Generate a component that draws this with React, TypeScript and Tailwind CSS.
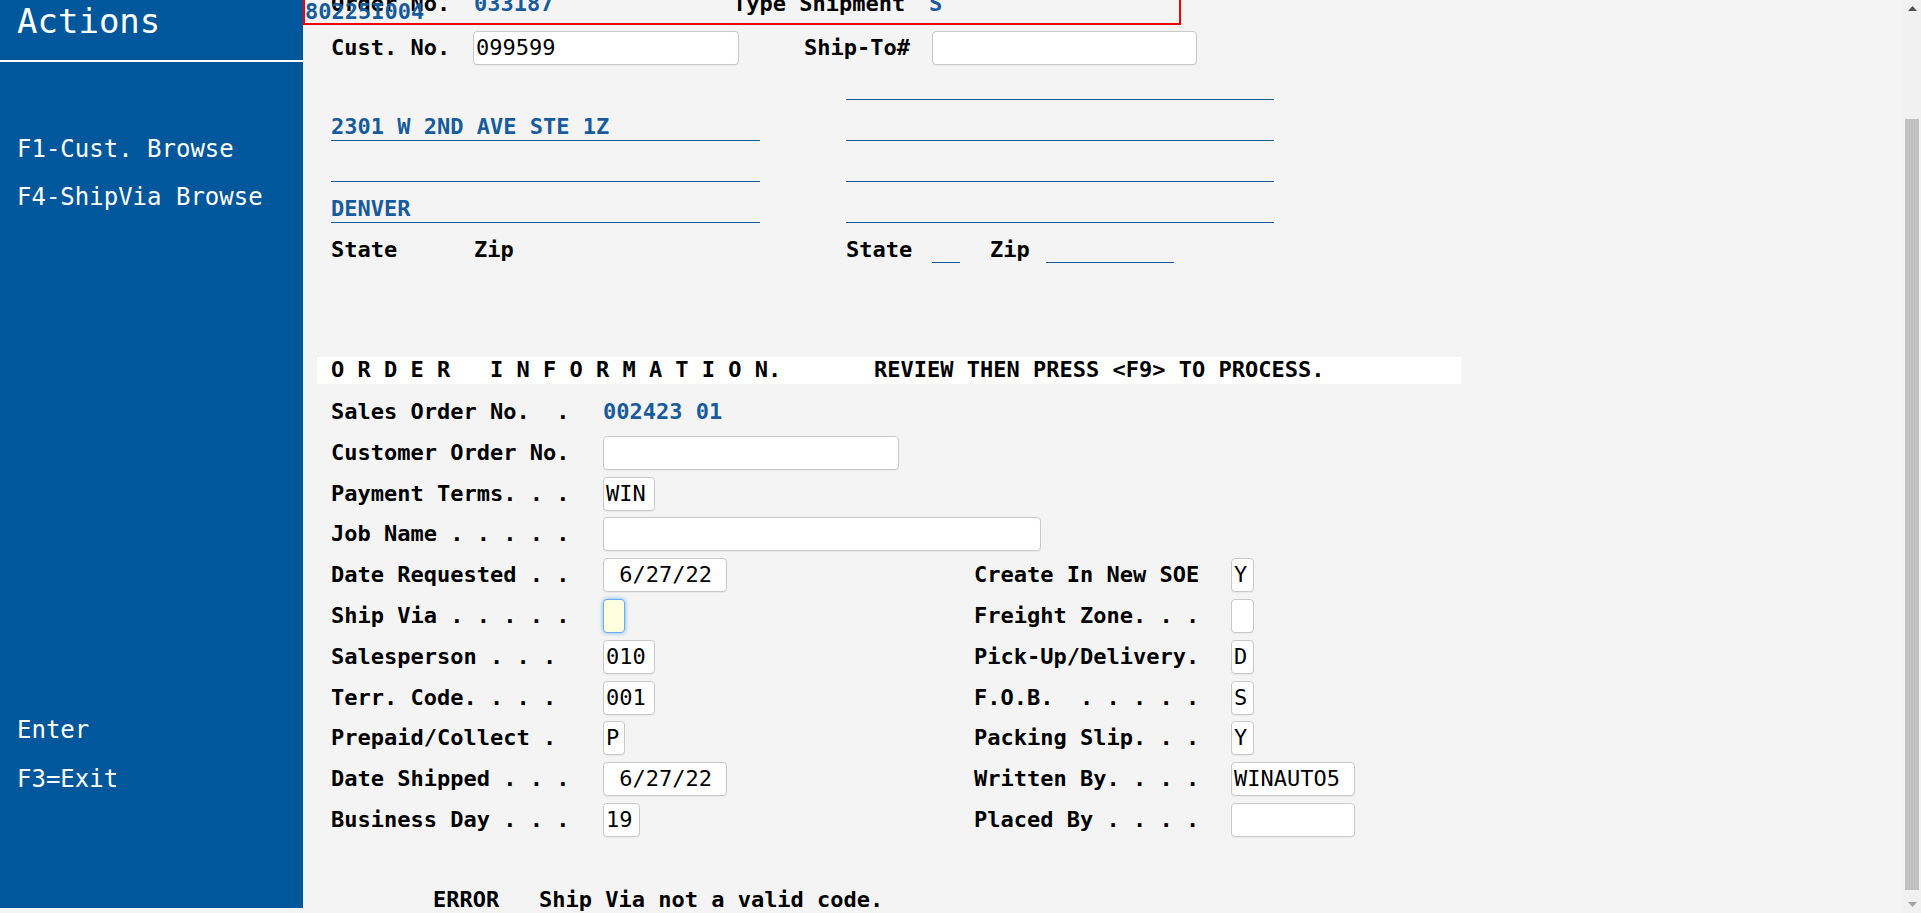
const mono = { fontFamily: '"DejaVu Sans Mono", "Liberation Mono", monospace' }

function Field({ value = '', w, focused = false }: { value?: string; w: string; focused?: boolean }) {
  return (
    <div
      className={`${w} h-[34px] shrink-0 rounded-[4px] border pl-[2px] text-[22px] leading-[32px] whitespace-pre text-black ${
        focused
          ? 'border-[#6aaef0] bg-[#ffffe0] shadow-[0_0_4px_#6aaef0]'
          : 'border-[#c9c9c9] bg-white shadow-[0_1px_1px_rgba(0,0,0,0.05)]'
      }`}
    >
      {value}
    </div>
  )
}

function Label({ text, w }: { text: string; w: string }) {
  return <div className={`${w} shrink-0 whitespace-pre font-bold text-[22px] leading-[26px] text-black`}>{text}</div>
}

type Side = { label: string; value?: string; w: string; focused?: boolean }

const rows: { left: Side; right?: Side }[] = [
  { left: { label: 'Customer Order No.', w: 'w-[296px]' } },
  { left: { label: 'Payment Terms. . .', value: 'WIN', w: 'w-[52px]' } },
  { left: { label: 'Job Name . . . . .', w: 'w-[438px]' } },
  {
    left: { label: 'Date Requested . .', value: ' 6/27/22', w: 'w-[124px]' },
    right: { label: 'Create In New SOE', value: 'Y', w: 'w-[23px]' },
  },
  {
    left: { label: 'Ship Via . . . . .', w: 'w-[22px]', focused: true },
    right: { label: 'Freight Zone. . .', w: 'w-[23px]' },
  },
  {
    left: { label: 'Salesperson . . .', value: '010', w: 'w-[52px]' },
    right: { label: 'Pick-Up/Delivery.', value: 'D', w: 'w-[23px]' },
  },
  {
    left: { label: 'Terr. Code. . . .', value: '001', w: 'w-[52px]' },
    right: { label: 'F.O.B.  . . . . .', value: 'S', w: 'w-[23px]' },
  },
  {
    left: { label: 'Prepaid/Collect .', value: 'P', w: 'w-[22px]' },
    right: { label: 'Packing Slip. . .', value: 'Y', w: 'w-[23px]' },
  },
  {
    left: { label: 'Date Shipped . . .', value: ' 6/27/22', w: 'w-[124px]' },
    right: { label: 'Written By. . . .', value: 'WINAUTO5', w: 'w-[124px]' },
  },
  {
    left: { label: 'Business Day . . .', value: '19', w: 'w-[37px]' },
    right: { label: 'Placed By . . . .', w: 'w-[124px]' },
  },
]

function Sidebar() {
  return (
    <aside className="w-[303px] h-[908px] shrink-0 bg-[#01579c] text-white flex flex-col">
      <div className="h-[60px] pl-[17px] text-[34px] leading-[42px]">Actions</div>
      <div className="h-[2px] bg-white" />
      <div className="mt-[72px] pl-[17px] text-[24px] leading-[30px]">F1-Cust. Browse</div>
      <div className="mt-[18px] pl-[17px] text-[24px] leading-[30px]">F4-ShipVia Browse</div>
      <div className="mt-[503px] pl-[17px] text-[24px] leading-[30px]">Enter</div>
      <div className="mt-[19px] pl-[17px] text-[24px] leading-[30px]">F3=Exit</div>
    </aside>
  )
}

function Scrollbar() {
  return (
    <div className="w-[18px] h-[913px] shrink-0 bg-[#f1f1f1] flex flex-col items-center">
      <div className="h-[17px] w-full flex items-center justify-center">
        <svg width="9" height="5" viewBox="0 0 9 5">
          <path d="M0 5 L4.5 0 L9 5 Z" fill="#505050" />
        </svg>
      </div>
      <div className="h-[102px]" />
      <div className="h-[771px] w-[14px] bg-[#c1c1c1]" />
      <div className="flex-1" />
      <div className="h-[17px] w-full flex items-center justify-center">
        <svg width="9" height="5" viewBox="0 0 9 5">
          <path d="M0 0 L9 0 L4.5 5 Z" fill="#a3a3a3" />
        </svg>
      </div>
    </div>
  )
}

const blue = 'text-[#175b9c]'

export default function App() {
  return (
    <div className="w-full h-[913px] overflow-hidden flex bg-[#f4f4f4]" style={mono}>
      <Sidebar />

      <main className="flex-1 h-[913px] overflow-hidden flex flex-col">
        {/* header box, scrolled partly out of view */}
        <div className="relative mt-[-14px] w-[878px] h-[39px] border-2 border-[#f00000] pt-[3px] pl-[26px] flex">
          <Label text="Order No." w="w-[143px]" />
          <div className={`w-[259px] font-bold text-[22px] leading-[26px] ${blue}`}>033187</div>
          <Label text="Type Shipment" w="w-[196px]" />
          <div className={`font-bold text-[22px] leading-[26px] ${blue}`}>S</div>
          <div className={`absolute left-0 top-[11px] font-bold text-[22px] leading-[26px] ${blue}`}>80225I004</div>
        </div>

        {/* customer */}
        <div className="mt-[6px] h-[34px] pl-[28px] flex items-center">
          <Label text="Cust. No." w="w-[142px]" />
          <Field value="099599" w="w-[266px]" />
          <div className="ml-[65px]">
            <Label text="Ship-To#" w="w-[128px]" />
          </div>
          <Field w="w-[265px]" />
        </div>

        {/* addresses */}
        <div className="pl-[28px] flex">
          <div className="w-[429px] flex flex-col">
            <div className="h-[35px]" />
            <div className={`h-[41px] border-b border-[#175b9c] flex items-end font-bold text-[22px] leading-[26px] whitespace-pre ${blue}`}>
              2301 W 2ND AVE STE 1Z
            </div>
            <div className="h-[41px] border-b border-[#175b9c]" />
            <div className={`h-[41px] border-b border-[#175b9c] flex items-end font-bold text-[22px] leading-[26px] ${blue}`}>
              DENVER
            </div>
            <div className="h-[40px] flex items-end">
              <Label text="State" w="w-[143px]" />
              <Label text="Zip" w="w-[60px]" />
            </div>
          </div>
          <div className="ml-[86px] w-[428px] flex flex-col">
            <div className="h-[35px] border-b border-[#175b9c]" />
            <div className="h-[41px] border-b border-[#175b9c]" />
            <div className="h-[41px] border-b border-[#175b9c]" />
            <div className="h-[41px] border-b border-[#175b9c]" />
            <div className="h-[40px] flex items-end">
              <Label text="State" w="w-[86px]" />
              <div className="w-[28px] h-[26px] border-b border-[#175b9c]" />
              <div className="ml-[30px]">
                <Label text="Zip" w="w-[56px]" />
              </div>
              <div className="w-[128px] h-[26px] border-b border-[#175b9c]" />
            </div>
          </div>
        </div>

        {/* order information */}
        <div className="mt-[94px] ml-[14px] w-[1144px] h-[27px] bg-white pl-[14px] flex items-center">
          <div className="whitespace-pre font-bold text-[22px] leading-[26px] text-black">
            {'O R D E R   I N F O R M A T I O N.       REVIEW THEN PRESS <F9> TO PROCESS.'}
          </div>
        </div>

        <div className="mt-[15px] h-[26px] pl-[28px] flex">
          <Label text="Sales Order No.  ." w="w-[272px]" />
          <div className={`whitespace-pre font-bold text-[22px] leading-[26px] ${blue}`}>002423 01</div>
        </div>

        <div className="mt-[11px] pl-[28px] flex flex-col gap-[6.8px]">
          {rows.map((r, i) => (
            <div key={i} className="h-[34px] flex items-center">
              <div className="w-[643px] shrink-0 flex items-center">
                <Label text={r.left.label} w="w-[272px]" />
                <Field value={r.left.value} w={r.left.w} focused={r.left.focused} />
              </div>
              {r.right && (
                <div className="flex items-center">
                  <Label text={r.right.label} w="w-[257px]" />
                  <Field value={r.right.value} w={r.right.w} />
                </div>
              )}
            </div>
          ))}
        </div>

        <div className="mt-[50px] pl-[130px] whitespace-pre font-bold text-[22px] leading-[26px] text-black">
          {'ERROR   Ship Via not a valid code.'}
        </div>
      </main>

      <Scrollbar />
    </div>
  )
}
